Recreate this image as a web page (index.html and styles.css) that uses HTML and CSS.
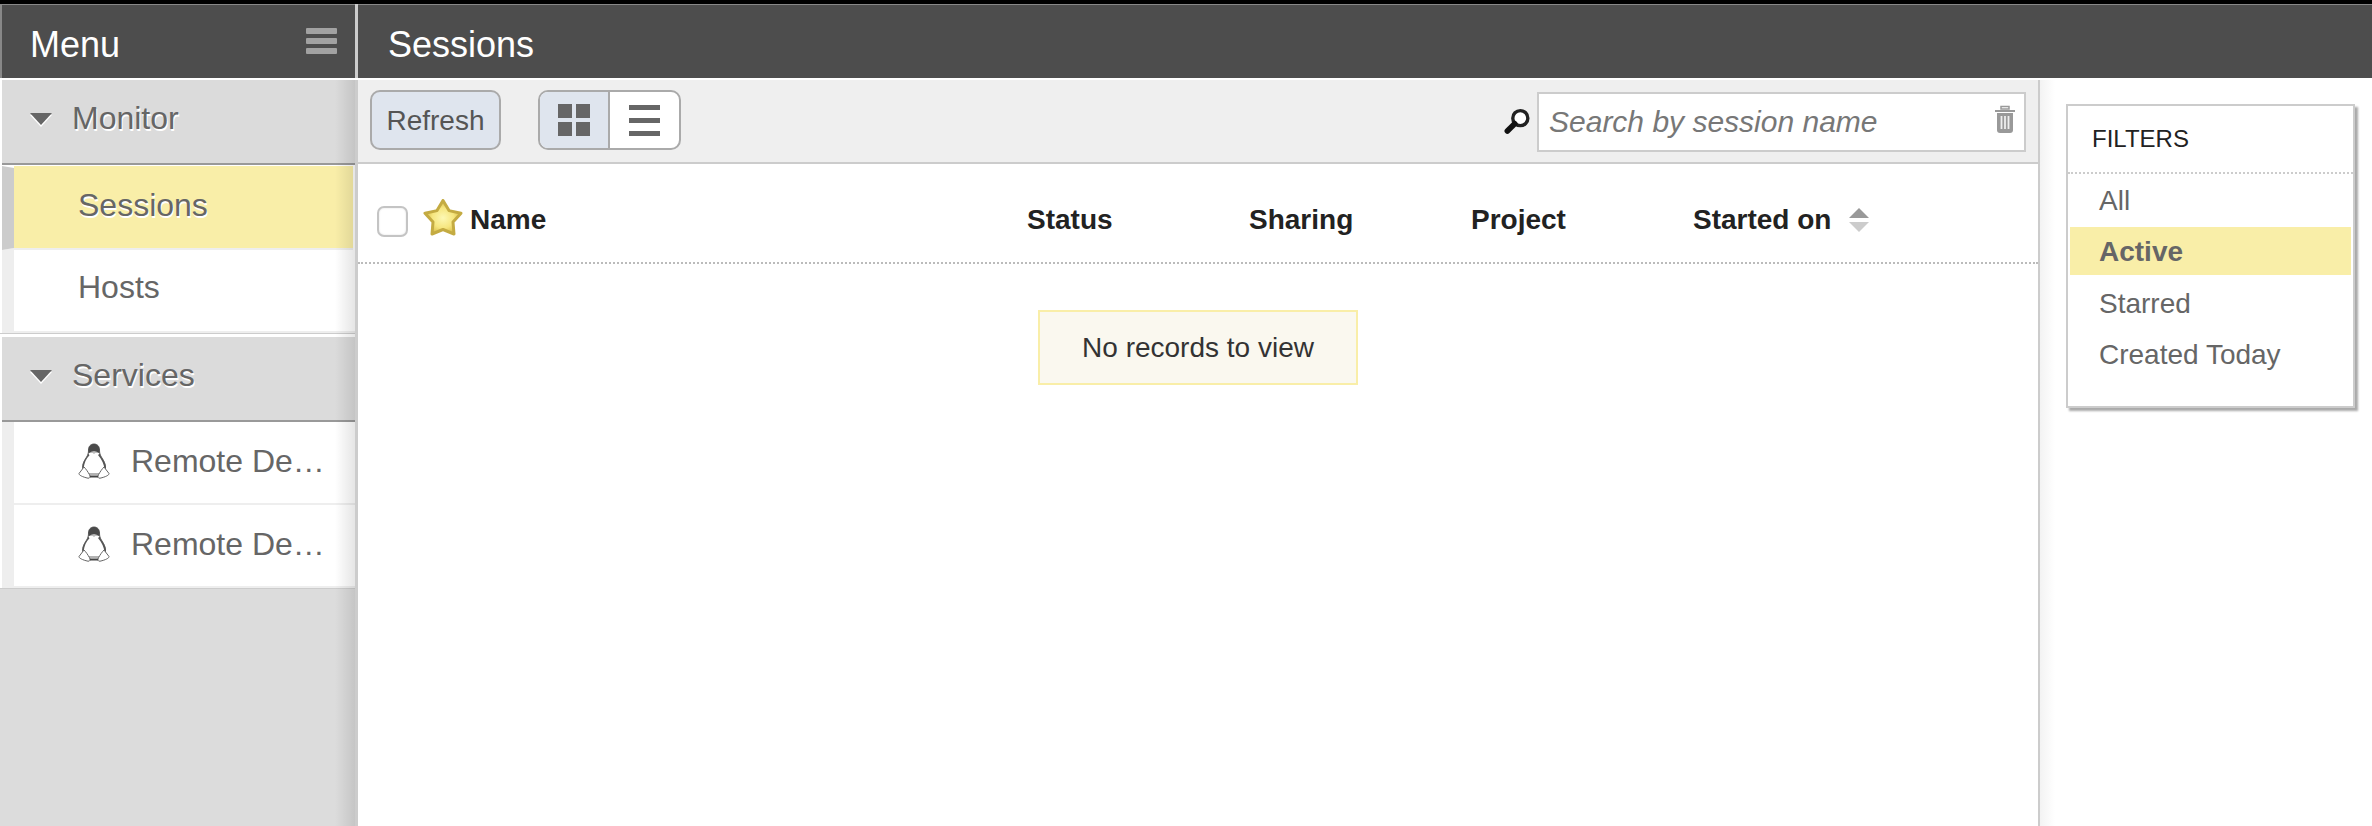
FILE: index.html
```html
<!DOCTYPE html>
<html lang="en">
<head>
<meta charset="utf-8">
<title>Sessions</title>
<link rel="stylesheet" href="styles.css">
</head>
<body>
<header class="topbar">
  <div class="top-menu">
    <span class="top-title">Menu</span>
    <span class="burger"><i></i><i></i><i></i></span>
  </div>
  <div class="top-page"><span class="top-title">Sessions</span></div>
</header>
<div class="layout">
  <aside class="sidebar">
    <section class="group group-first">
      <div class="group-head"><span class="caret"></span><span>Monitor</span></div>
      <div class="row row-selected"><span class="row-strip"></span><span class="row-text">Sessions</span></div>
      <div class="row row-short"><span class="row-text">Hosts</span></div>
    </section>
    <section class="group">
      <div class="group-head"><span class="caret"></span><span>Services</span></div>
      <div class="row">
        <svg class="tux" viewBox="0 0 32 36"><use href="#tux"/></svg>
        <span class="row-label">Remote Desktop</span>
      </div>
      <div class="row">
        <svg class="tux" viewBox="0 0 32 36"><use href="#tux"/></svg>
        <span class="row-label">Remote Desktop</span>
      </div>
    </section>
  </aside>
  <main class="content">
    <div class="toolbar">
      <button class="btn">Refresh</button>
      <div class="toggle">
        <span class="toggle-cell toggle-on">
          <span class="grid-icon"><i></i><i></i><i></i><i></i></span>
        </span>
        <span class="toggle-cell">
          <span class="list-icon"><i></i><i></i><i></i></span>
        </span>
      </div>
      <svg class="mag" viewBox="0 0 24 24">
        <circle cx="14.500" cy="9" r="6.700" fill="#fff" stroke="#222" stroke-width="3"/>
        <path d="M9.500 14 3 20.500" stroke="#111" stroke-width="5" stroke-linecap="round"/>
      </svg>
      <div class="search">
        <span class="search-text">Search by session name</span>
        <svg class="trash" viewBox="0 0 22 28">
          <path d="M1 6h20" stroke="#999" stroke-width="2"/>
          <path d="M7 4h8V1.500H7z" fill="none" stroke="#999" stroke-width="1.500"/>
          <path d="M3 8h16v17a3 3 0 0 1-3 3H6a3 3 0 0 1-3-3z" fill="#999"/>
          <path d="M7.500 11v13M11 11v13M14.500 11v13" stroke="#eee" stroke-width="1.800"/>
        </svg>
      </div>
    </div>
    <div class="table-head">
      <span class="check"></span>
      <svg class="star" viewBox="0 0 40 38">
        <defs>
          <radialGradient id="starFill" cx="50%" cy="52%" r="50%">
            <stop offset="0" stop-color="#fdf8b4"/>
            <stop offset=".6" stop-color="#f6e67f"/>
            <stop offset="1" stop-color="#d9bd4a"/>
          </radialGradient>
        </defs>
        <path d="M20 2.500 26 12.600 38 15.200 30 24 31 36 20 31.500 9 36 10 24 2 15.200 14 12.600Z" fill="url(#starFill)" stroke="#c4ab42" stroke-width="3" stroke-linejoin="round"/>
      </svg>
      <span class="col col-name">Name</span>
      <span class="col col-wide">Status</span>
      <span class="col col-wide">Sharing</span>
      <span class="col col-wide">Project</span>
      <span class="col">Started on</span>
      <span class="sort"><i class="sort-up"></i><i class="sort-down"></i></span>
    </div>
    <div class="empty"><div class="note">No records to view</div></div>
  </main>
  <aside class="filter-area">
    <div class="filters">
      <div class="filters-title">FILTERS</div>
      <ul class="filter-list">
        <li class="filter">All</li>
        <li class="filter filter-active">Active</li>
        <li class="filter">Starred</li>
        <li class="filter">Created Today</li>
      </ul>
    </div>
  </aside>
</div>
<svg class="sprites" width="0" height="0">
  <symbol id="tux" viewBox="0 0 32 36">
    <path d="M16 1c-3.500 0-5.500 2.500-5.500 6 0 3-.5 5-2.500 8-2 3-3.500 6-3.500 10 0 2 1 4 3 6h17c2-2 3-4 3-6 0-4-1.500-7-3.500-10-2-3-2.500-5-2.500-8 0-3.500-2-6-5.500-6z" fill="#fff" stroke="#666" stroke-width="1"/>
    <path d="M16 1c-3.500 0-5.500 2.500-5.500 6 0 1.500 0 2.500-.3 3.500 1.800-1 3.800-1.500 5.800-1 2-.5 4-.1 5.800 1-.3-1-.3-2-.3-3.500 0-3.500-2-6-5.500-6z" fill="#4a4a4a"/>
    <path d="M21.800 10.500c.6 2 1.600 3.500 2.800 5.300 2 3 3.400 6 3.400 9.200l-1.500 1.500c-.5-5.500-2.500-10-6.500-14.500zM10.200 10.500c-.6 2-1.600 3.500-2.800 5.300C5.500 18.500 4.500 21 4.500 24l1.200 1c.6-5 2.300-9 5.800-12.700z" fill="#555"/>
    <path d="M13 8.800 16 11l3-2.200-3-.8z" fill="#bbb"/>
    <path d="M6 24 1 30.500c-.4 1.500 3.500 3.500 9 4.700 2 .3 2.600-1.500 1.500-3.500C10 29 8 26 6 24zM26 24l5 6.500c.4 1.500-3.500 3.500-9 4.700-2 .3-2.600-1.500-1.500-3.500C22 29 24 26 26 24z" fill="#fff" stroke="#666" stroke-width="1"/>
    <path d="M12 33.500h8" stroke="#444" stroke-width="2"/>
  </symbol>
</svg>
</body>
</html>
```
FILE: styles.css
```css
* { box-sizing: border-box; }
html, body { margin: 0; height: 100%; overflow: hidden; }
body {
  display: flex;
  flex-direction: column;
  background: #fff;
  font-family: "Liberation Sans", Arial, sans-serif;
  color: #666;
}
.sprites { position: absolute; }

.topbar {
  display: flex;
  flex: none;
  height: 80px;
  border-top: 4px solid #000;
  border-bottom: 2px solid #fff;
  background: #4d4d4d;
  box-shadow: inset 0 1px 0 #888;
  color: #fff;
}
.top-menu {
  display: flex;
  align-items: center;
  justify-content: space-between;
  width: 358px;
  padding: 0 18px 0 28px;
  border-left: 2px solid #888;
  border-right: 3px solid #ccc;
}
.top-page { display: flex; align-items: center; padding-left: 30px; }
.top-title { font-size: 36px; line-height: 40px; padding-top: 8px; }
.burger { display: flex; flex-direction: column; gap: 4px; }
.burger i { display: block; width: 31px; height: 6px; border-radius: 1px; background: #a2a2a2; }

.layout { display: flex; flex: 1; min-height: 0; }

.sidebar {
  position: relative;
  flex: none;
  width: 358px;
  border-right: 3px solid #ccc;
  background: #dcdcdc;
}
.sidebar::after {
  content: "";
  position: absolute;
  top: 0;
  right: 0;
  bottom: 0;
  width: 20px;
  background: linear-gradient(to right, rgba(0,0,0,0), rgba(0,0,0,.1));
  pointer-events: none;
}
.group {
  padding-left: 2px;
  background: #fff;
  border-bottom: 1px solid #ccc;
}
.group-first { margin-bottom: 3px; box-shadow: 0 3px 0 #fff; }
.group-head {
  display: flex;
  align-items: center;
  gap: 20px;
  height: 85px;
  padding: 0 0 6px 28px;
  background: #dbdbdb;
  border-bottom: 2px solid #999;
  font-size: 32px;
  text-shadow: 1px 2px 0 #fff;
}
.caret {
  width: 0;
  height: 0;
  border-left: 11px solid transparent;
  border-right: 11px solid transparent;
  border-top: 12px solid #666;
  filter: drop-shadow(0 2px 0 #fff);
}
.row {
  position: relative;
  display: flex;
  align-items: center;
  height: 83px;
  padding: 0 0 3px 64px;
  background: #fff;
  border-left: 12px solid #eee;
  border-bottom: 2px solid #eee;
  font-size: 32px;
}
.row-short { padding-bottom: 6px; }
.row-selected {
  height: 85px;
  padding-top: 1px;
  border-left-color: transparent;
  background: linear-gradient(#fff 1px, #f9eea8 1px);
  background-clip: padding-box;
  margin-right: 2px;
  text-shadow: 1px 2px 0 #fff;
}
.row-strip {
  position: absolute;
  top: 1px;
  bottom: -2px;
  left: -12px;
  width: 12px;
  background: #ccc;
  clip-path: polygon(0 0, 100% 2px, 100% calc(100% - 2px), 0 100%);
}
.row-text { display: block; }
.row:has(.tux) { gap: 21px; }
.tux { flex: none; width: 32px; height: 36px; }
.row-label {
  width: 194px;
  overflow: hidden;
  white-space: nowrap;
  text-overflow: ellipsis;
}

.content { display: flex; flex-direction: column; flex: none; width: 1682px; border-right: 2px solid #ccc; }
.toolbar {
  display: flex;
  align-items: center;
  flex: none;
  height: 84px;
  padding: 0 12px 2px 12px;
  background: #efefef;
  border-bottom: 2px solid #ccc;
}
.btn {
  width: 131px;
  height: 60px;
  padding: 2px 0 0;
  border: 2px solid #aaa;
  border-radius: 10px;
  background: #dfe5ee;
  color: #555;
  font: 28px "Liberation Sans", Arial, sans-serif;
}
.toggle {
  display: flex;
  width: 143px;
  height: 60px;
  margin-left: 37px;
  border: 2px solid #aaa;
  border-radius: 10px;
  overflow: hidden;
  background: #fff;
}
.toggle-cell { display: flex; align-items: center; justify-content: center; flex: 1; }
.toggle-on { flex: none; width: 70px; background: #dfe5ee; border-right: 2px solid #aaa; }
.grid-icon { display: grid; grid-template-columns: 14px 14px; gap: 4px; }
.grid-icon i { height: 14px; background: #666; }
.list-icon { display: flex; flex-direction: column; gap: 8px; }
.list-icon i { display: block; width: 31px; height: 5px; background: #666; }
.mag { flex: none; width: 27px; height: 27px; margin: 2px 6px 0 auto; }
.search {
  display: flex;
  align-items: center;
  justify-content: space-between;
  width: 489px;
  height: 60px;
  margin-top: 4px;
  padding: 0 8px 0 10px;
  background: #fff;
  border: 2px solid #ccc;
}
.search-text { color: #777; font-size: 30px; font-style: italic; }
.trash { flex: none; width: 22px; height: 28px; margin-bottom: 6px; }

.table-head {
  display: flex;
  align-items: center;
  flex: none;
  height: 100px;
  padding: 17px 0 0 19px;
  border-bottom: 2px dotted #bbb;
  color: #222;
  font-size: 28px;
  font-weight: 700;
}
.check {
  flex: none;
  width: 31px;
  height: 31px;
  border: 2px solid #c4c4c4;
  border-radius: 7px;
  box-shadow: inset 0 0 2px #ddd;
}
.star { flex: none; width: 40px; height: 38px; margin: -9px 7px 0 15px; filter: blur(.5px); }
.col { padding-bottom: 4px; }
.col-name { width: 557px; }
.col-wide { width: 222px; }
.sort { display: flex; flex-direction: column; gap: 4px; margin: 0 0 4px 18px; }
.sort i { display: block; width: 0; height: 0; border-left: 10px solid transparent; border-right: 10px solid transparent; }
.sort-up { border-bottom: 10px solid #999; }
.sort-down { border-top: 10px solid #ccc; }

.empty { display: flex; justify-content: center; padding-top: 46px; }
.note {
  width: 320px;
  height: 75px;
  background: #faf8ef;
  border: 2px solid #f9eea8;
  color: #333;
  font-size: 28px;
  line-height: 72px;
  text-align: center;
}

.filter-area {
  flex: 1;
  padding: 24px 17px 0 26px;
  background: linear-gradient(to right, #f3f3f3, #fff 15px);
}
.filters {
  height: 304px;
  padding: 0 2px;
  background: #fff;
  border: 2px solid #ccc;
  box-shadow: 3px 3px 2px #aaa;
}
.filters-title {
  height: 68px;
  margin: 0 -2px;
  padding-left: 24px;
  border-bottom: 2px dotted #ccc;
  color: #222;
  font-size: 24px;
  line-height: 66px;
}
.filter-list { margin: 0; padding: 2px 0 0; list-style: none; }
.filter {
  height: 48px;
  margin-bottom: 3.300px;
  padding-left: 29px;
  font-size: 28px;
  line-height: 49px;
}
.filter-active { background: #f9eea8; font-weight: 700; }
```
